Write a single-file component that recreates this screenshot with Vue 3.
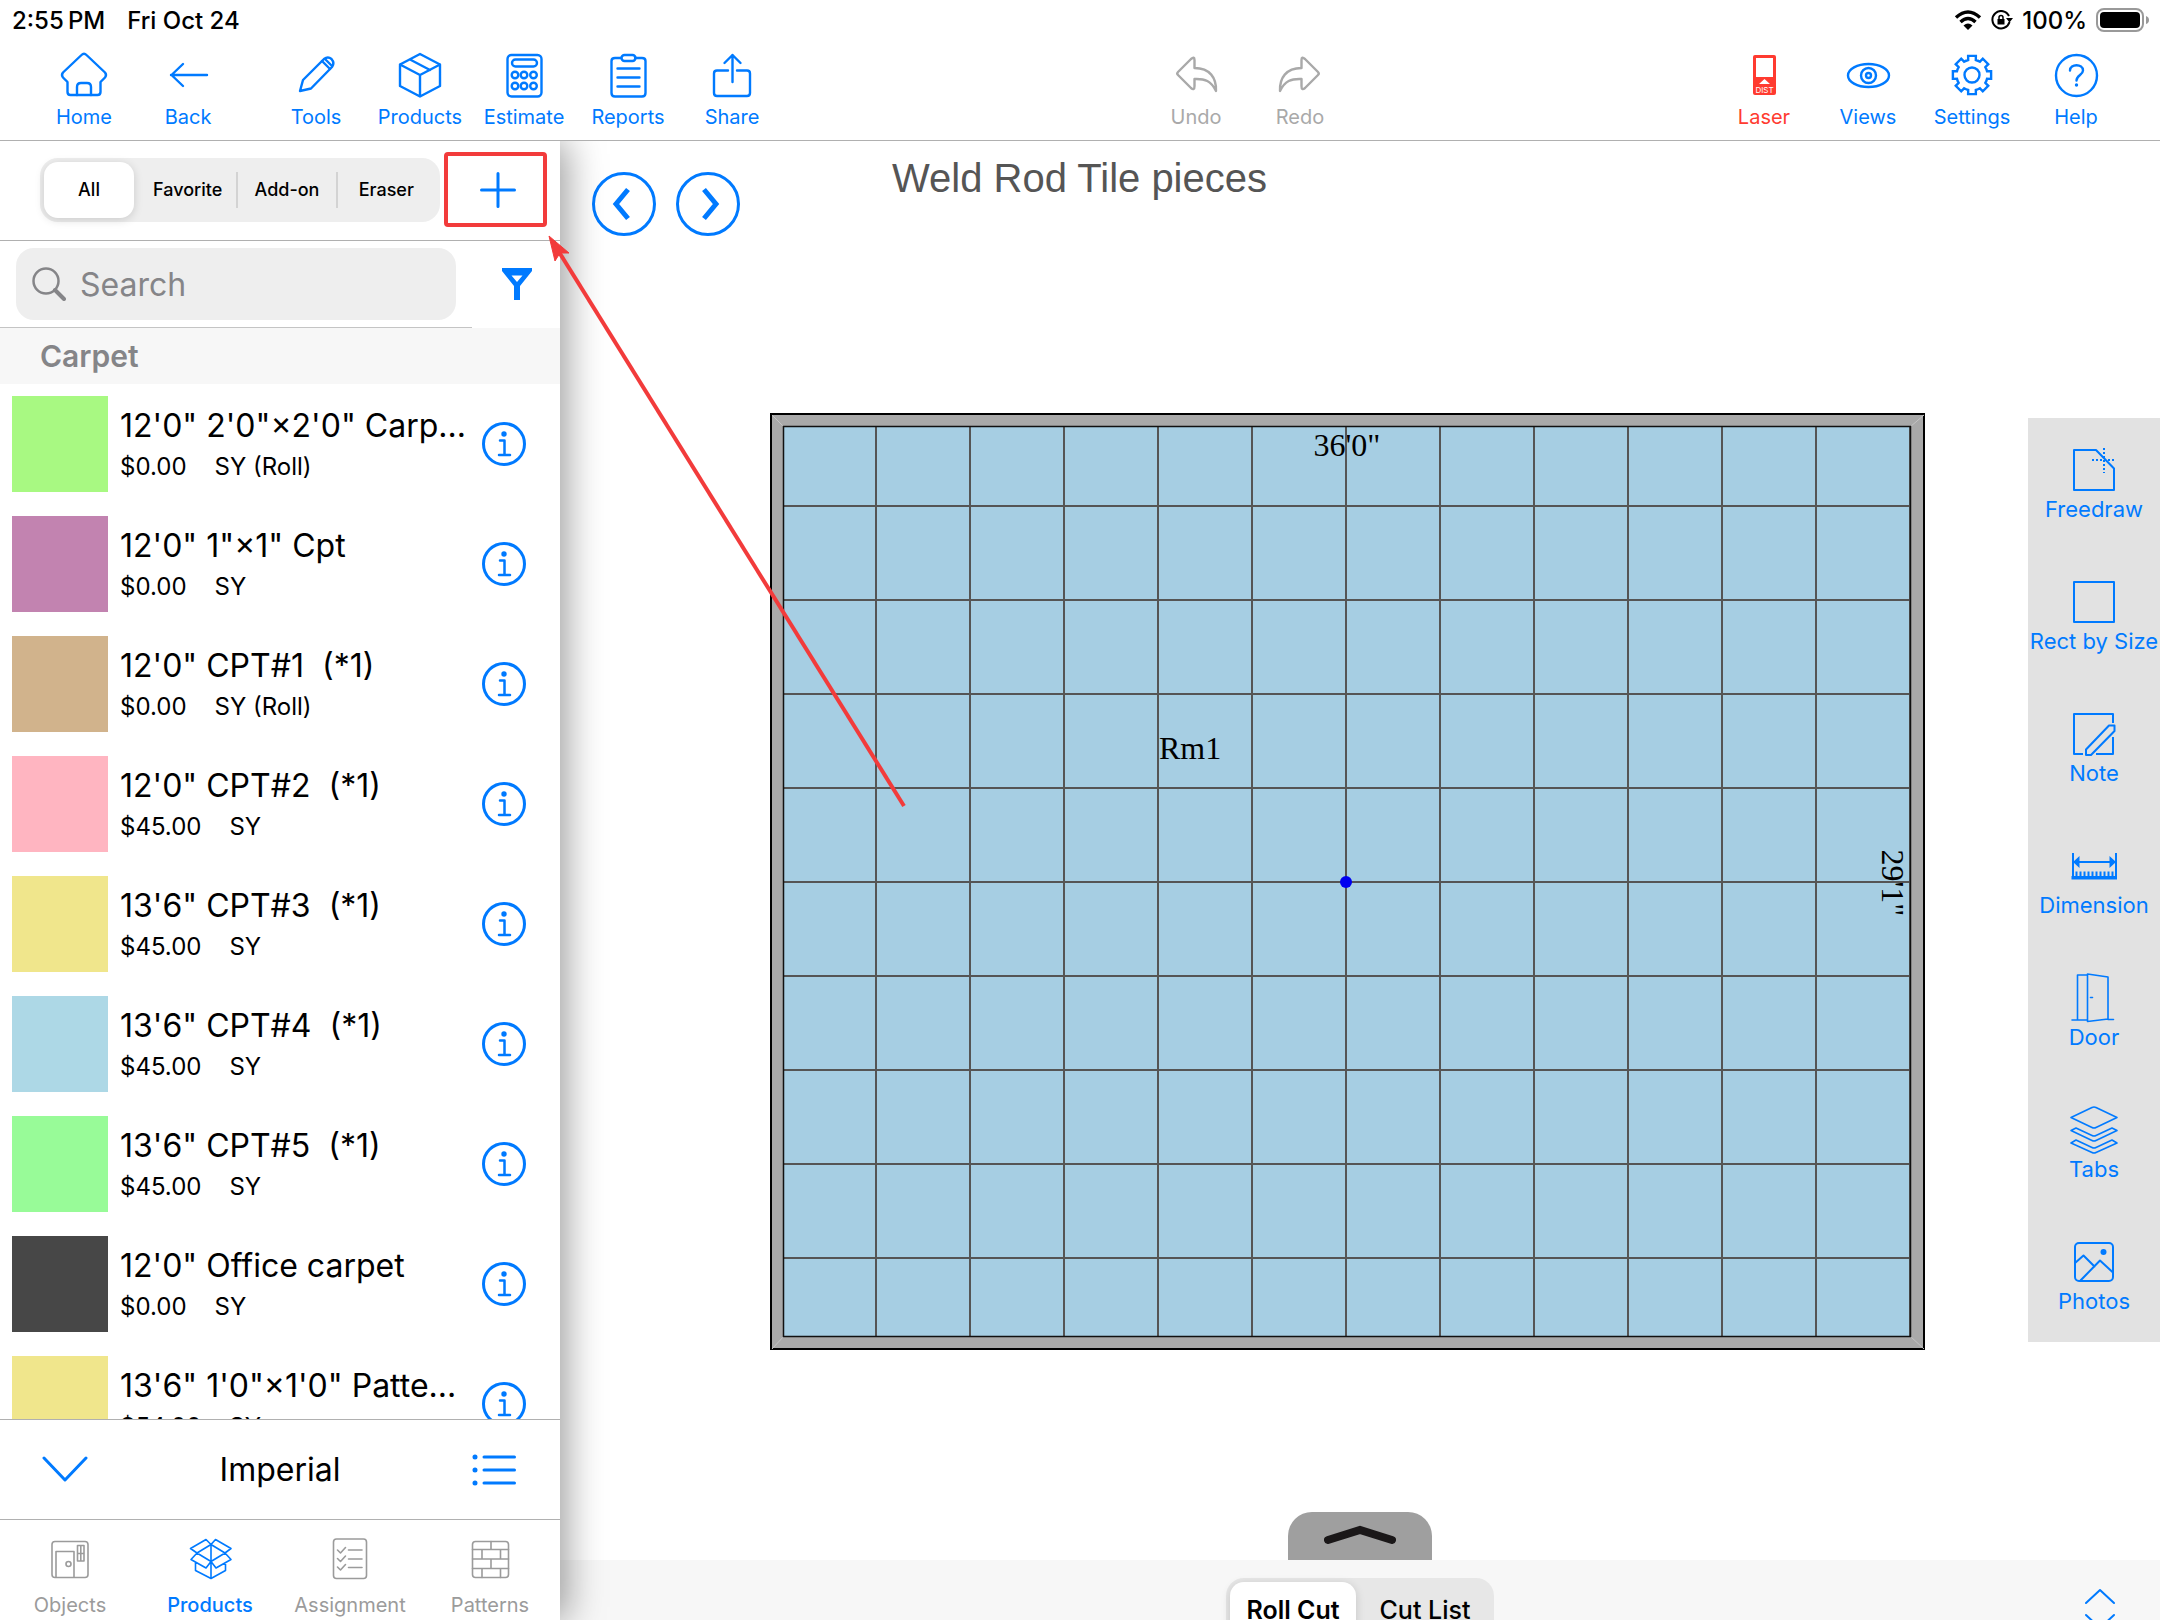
<script setup>
import { ref } from 'vue'

const gear = (() => {
  const c = 24
  const pt = (r, a) => `${(c + r * Math.cos(a)).toFixed(2)} ${(c + r * Math.sin(a)).toFixed(2)}`
  let d = ''
  for (let i = 0; i < 8; i++) {
    const a = (i * Math.PI) / 4 - Math.PI / 2
    d += `${i ? 'A15.5 15.5 0 0 1' : 'M'}${pt(15.5, a - 0.25)}L${pt(19.5, a - 0.2)}L${pt(19.5, a + 0.2)}L${pt(15.5, a + 0.25)}`
  }
  return `${d}A15.5 15.5 0 0 1 ${pt(15.5, -Math.PI / 2 - 0.25)}Z`
})()

const undoPath =
  'M6 21L19 8Q22.5 5 22.5 9V17C38 17 44.5 27 44 40C39 30 33 27.5 22.5 28V35Q22.5 40 19 37L6 24Q4.5 22.5 6 21Z'

const icons = {
  home: '<path d="M21.5 4Q24 1.500 26.500 4L45 21.500Q47 24 45 26.500L40.500 31V41Q40.500 44 37.500 44H10.500Q7.500 44 7.500 41V31L3 26.500Q1 24 3 21.500Z"/><path d="M17 44V36Q17 32 21 32H27Q31 32 31 36V44"/>',
  back: '<path d="M43 24H7M19 13L7.500 24L19 35"/>',
  tools: '<path d="M8 40L11 29L32 8Q36 5 39.500 8Q43 12 40 16L19 37.500Z"/><path d="M30 10L38 18M33 8L40 15"/>',
  products: '<path d="M24 3L44 13.500V35L24 45.500L4 35V13.500ZM4 13.500L24 24L44 13.500M24 24V45M14 8.500L34 19"/>',
  estimate:
    '<rect x="7.500" y="4" width="34" height="41.500" rx="4"/><rect x="12" y="8.500" width="25" height="7" rx="3.500"/><circle cx="15" cy="24" r="3.300"/><circle cx="24" cy="24" r="3.300"/><circle cx="33.500" cy="24" r="3.300"/><circle cx="15" cy="35" r="3.300"/><circle cx="24" cy="35" r="3.300"/><circle cx="33.500" cy="35" r="3.300"/>',
  reports:
    '<path d="M17 7H11Q7.500 7 7.500 10V42Q7.500 45.500 11 45.500H38Q41.500 45.500 41.500 42V10Q41.500 7 38 7H31"/><rect x="17.500" y="4" width="14" height="6" rx="3"/><path d="M13.500 17.500H35.500M13.500 26.500H35.500M13.500 35.500H35.500"/>',
  share: '<path d="M20 19.500H9Q6 19.500 6 22.500V42Q6 45 9 45H39Q42 45 42 42V22.500Q42 19.500 39 19.500H29M24.500 31V4M16.500 12L24.500 4L32.500 12"/>',
  undo: `<path d="${undoPath}"/>`,
  redo: `<path transform="matrix(-1 0 0 1 48 0)" d="${undoPath}"/>`,
  laser:
    '<rect x="13" y="4" width="23" height="40" rx="2" fill="currentColor" stroke="none"/><path d="M16 7H33V26H16ZM24.500 28L30 33H19Z" fill="#fff" stroke="none"/><text x="24.500" y="42" text-anchor="middle" font-size="8" fill="#fff" stroke="none">DIST</text>',
  views: '<ellipse cx="24.500" cy="24.500" rx="20.500" ry="11.500"/><circle cx="24.500" cy="24.500" r="7.500"/><circle cx="24.500" cy="24.500" r="2.500"/>',
  settings: `<path stroke-linejoin="miter" d="${gear}"/><circle cx="24" cy="24" r="7.500"/>`,
  help: '<circle cx="24.500" cy="24.500" r="20.500"/><path d="M18 19.500C18 12.500 31 12.500 31 19.500C31 24 24.500 24 24.500 29.500"/><circle cx="24.500" cy="34" r="1.700" fill="currentColor" stroke="none"/>',
  freedraw: '<path d="M4 4H26L44 22.500V44H4Z"/><path d="M22 14H46M34 2V27" stroke-dasharray="2 2" stroke-linecap="butt"/>',
  rect: '<path d="M4 4H44V44H4Z"/>',
  note: '<path d="M43 13V4H4V44H13M26 44H43V27M39 15.500H44.500V21L21 45H16V39.500Z" stroke-linecap="butt"/>',
  dimension:
    '<path d="M3 11V36M46 11V36M6 20H43" stroke-linecap="butt"/><path d="M1.500 34H47V37.500H1.500ZM3 20L9.500 14V26ZM46 20L39.500 14V26Z" fill="currentColor" stroke="none"/><path d="M5.500 32H44" stroke-width="5" stroke-dasharray="2 2" stroke-linecap="butt"/>',
  door: '<path stroke-width="1.600" d="M17.500 1H7.500V46M2 46H17.500M17.500 0L38 3V45L17.500 47.500ZM38 45.500H43.500M20.500 23.500H22.500"/>',
  tabs: '<path stroke-width="1.600" d="M22 1.500Q24 .5 26 1.500L47 11.500L26 21.500Q24 22.500 22 21.500L1 11.500ZM6 22L1 24.500L22 34.500Q24 35.500 26 34.500L47 24.500L42 22L26 29.500Q24 30.500 22 29.500ZM6 34L1 37L22 46.500Q24 47.500 26 46.500L47 37L42 34L26 41.500Q24 42.500 22 41.500Z"/>',
  photos:
    '<rect x="5" y="5" width="38" height="38" rx="4"/><circle cx="33.500" cy="14" r="3" fill="currentColor" stroke="none"/><path d="M5 25L13.500 17.500L24.500 28.500M10 43L30 22.500L43 34.500"/>',
  objects:
    '<rect x="6" y="6.500" width="36" height="36" rx="3"/><path d="M10 42V16.500H28V42M31.500 10.500H38V26H31.500ZM34.800 10.500V26M31.500 18.500H38"/><circle cx="22.500" cy="29" r="2.500"/>',
  box: '<path d="M25 9.500L20 4.500L4.500 13.500L11 18L25 9.500L29.500 4.500L45 13.500L39 18ZM11 18L25 26.500L20 33L5 24.500ZM39 18L25 26.500L30 33L45 24.500ZM9.500 27.500V35.500L25 43.500L39.500 35.500V27.500M25 9.500V43.500"/>',
  assignment:
    '<rect x="7.500" y="4" width="33" height="39.500" rx="3"/><path d="M11.500 15L14.500 18L19.500 12.500M11.500 23.500L14.500 26.500L19.500 21M11.500 32L14.500 35L19.500 29.500M22.500 15H36M22.500 24H36M22.500 32.500H36"/>',
  patterns:
    '<rect x="6.500" y="6.500" width="36" height="36" rx="3"/><path d="M6.500 14.500H42.500M6.500 24H42.500M6.500 33.500H42.500M25 6.500V14.500M16 14.500V24M34.500 14.500V24M25 24V33.500M16 33.500V42.500M34.500 33.500V42.500"/>',
}

const leftTools = [
  [
    { icon: 'home', label: 'Home' },
    { icon: 'back', label: 'Back' },
  ],
  [
    { icon: 'tools', label: 'Tools' },
    { icon: 'products', label: 'Products' },
    { icon: 'estimate', label: 'Estimate' },
    { icon: 'reports', label: 'Reports' },
    { icon: 'share', label: 'Share' },
  ],
]
const historyTools = [
  { icon: 'undo', label: 'Undo' },
  { icon: 'redo', label: 'Redo' },
]
const rightTools = [
  { icon: 'laser', label: 'Laser', alert: true },
  { icon: 'views', label: 'Views' },
  { icon: 'settings', label: 'Settings' },
  { icon: 'help', label: 'Help' },
]

const filters = ['All', 'Favorite', 'Add-on', 'Eraser']
const filter = ref('All')
const query = ref('')

const products = [
  { color: '#a8f982', name: '12\'0" 2\'0"×2\'0" Carp...', price: '$0.00', unit: 'SY (Roll)' },
  { color: '#c283b0', name: '12\'0" 1"×1" Cpt', price: '$0.00', unit: 'SY' },
  { color: '#d1b38c', name: '12\'0" CPT#1  (*1)', price: '$0.00', unit: 'SY (Roll)' },
  { color: '#ffb5c1', name: '12\'0" CPT#2  (*1)', price: '$45.00', unit: 'SY' },
  { color: '#f0e68c', name: '13\'6" CPT#3  (*1)', price: '$45.00', unit: 'SY' },
  { color: '#add8e6', name: '13\'6" CPT#4  (*1)', price: '$45.00', unit: 'SY' },
  { color: '#98fb98', name: '13\'6" CPT#5  (*1)', price: '$45.00', unit: 'SY' },
  { color: '#474747', name: '12\'0" Office carpet', price: '$0.00', unit: 'SY' },
  { color: '#f0e68c', name: '13\'6" 1\'0"×1\'0" Patte...', price: '$54.00', unit: 'SY' },
]

const tabs = [
  { icon: 'objects', label: 'Objects' },
  { icon: 'box', label: 'Products' },
  { icon: 'assignment', label: 'Assignment' },
  { icon: 'patterns', label: 'Patterns' },
]
const tab = ref('Products')

const palette = [
  { icon: 'freedraw', label: 'Freedraw' },
  { icon: 'rect', label: 'Rect by Size' },
  { icon: 'note', label: 'Note' },
  { icon: 'dimension', label: 'Dimension' },
  { icon: 'door', label: 'Door' },
  { icon: 'tabs', label: 'Tabs' },
  { icon: 'photos', label: 'Photos' },
]

const cutViews = ['Roll Cut', 'Cut List']
const cutView = ref('Roll Cut')

const tile = 94
const columns = Array.from({ length: 12 }, (_, i) => 106 + i * tile)
const rows = Array.from({ length: 9 }, (_, i) => 93 + i * tile)
</script>

<template>
  <div class="app">
    <header class="header">
      <div class="status">
        <span>2:55&thinsp;PM</span>
        <span>Fri Oct 24</span>
        <div class="status-right">
          <svg width="28" height="20" viewBox="0 0 28 20" aria-label="Wi-Fi">
            <path d="M14 20L9.500 15.500Q14 11.500 18.500 15.500Z" />
            <path d="M2 7.500Q14-3.500 26 7.500M6.500 12Q14 5 21.500 12" fill="none" stroke="#000" stroke-width="3.400" />
          </svg>
          <svg width="22" height="20" viewBox="0 0 22 20" aria-label="Rotation lock">
            <path d="M18.500 12A8.700 8.700 0 1 1 18 6" fill="none" stroke="#000" stroke-width="2" />
            <path d="M15 8H22L18.500 12.500ZM6.500 9H13.500V14.500H6.500Z" />
            <path d="M8 9V7.500Q8 5.500 10 5.500T12 7.500V9" fill="none" stroke="#000" stroke-width="1.500" />
          </svg>
          <span>100%</span>
          <svg width="54" height="24" viewBox="0 0 54 24" aria-label="Battery">
            <rect x="1" y="1" width="46" height="22" rx="7" fill="none" stroke="#999" stroke-width="2" />
            <rect x="4" y="4" width="40" height="16" rx="4" />
            <path d="M50 8Q53 9 53 12T50 16Z" fill="#999" />
          </svg>
        </div>
      </div>
      <nav class="toolbar">
        <div class="tool-groups">
          <div v-for="(group, i) in leftTools" :key="i" class="tool-group">
            <button v-for="t in group" :key="t.label" class="tool">
              <svg class="icon" viewBox="0 0 48 48" v-html="icons[t.icon]" />
              <span>{{ t.label }}</span>
            </button>
          </div>
        </div>
        <div class="tool-group">
          <button v-for="t in historyTools" :key="t.label" class="tool muted">
            <svg class="icon" viewBox="0 0 48 48" v-html="icons[t.icon]" />
            <span>{{ t.label }}</span>
          </button>
        </div>
        <div class="tool-group">
          <button v-for="t in rightTools" :key="t.label" class="tool" :class="{ alert: t.alert }">
            <svg class="icon" viewBox="0 0 48 48" v-html="icons[t.icon]" />
            <span>{{ t.label }}</span>
          </button>
        </div>
      </nav>
    </header>

    <div class="body">
      <aside class="sidebar">
        <div class="filter-row">
          <div class="segmented">
            <button
              v-for="f in filters"
              :key="f"
              class="segment"
              :class="{ active: filter === f }"
              :aria-pressed="filter === f"
              @click="filter = f"
            >
              {{ f }}
            </button>
          </div>
          <button class="add" aria-label="Add product">
            <svg width="36" height="36" viewBox="0 0 36 36"><path d="M18 1.500V34.500M1.500 18H34.500" /></svg>
          </button>
        </div>

        <div class="search-row">
          <div class="search-cell">
            <label class="search">
              <svg width="34" height="34" viewBox="0 0 34 34">
                <circle cx="14" cy="14" r="12.500" />
                <path d="M23 23L32 32" stroke-width="4" />
              </svg>
              <input v-model="query" type="text" placeholder="Search" aria-label="Search" />
            </label>
          </div>
          <button class="funnel" aria-label="Filter">
            <svg width="32" height="34" viewBox="0 0 32 34">
              <path fill-rule="evenodd" d="M1 1H31V4L19 19V33H13V19L1 4ZM10.500 8.500L16 15L21.500 8.500Z" />
            </svg>
          </button>
        </div>

        <h2 class="section">Carpet</h2>
        <ul class="list">
          <li v-for="p in products" :key="p.name" class="row">
            <span class="swatch" :style="{ background: p.color }" />
            <div class="info">
              <div class="name">{{ p.name }}</div>
              <div class="meta"><span>{{ p.price }}</span><span>{{ p.unit }}</span></div>
            </div>
            <button class="details" :aria-label="'Details for ' + p.name">
              <svg width="44" height="44" viewBox="0 0 44 44">
                <circle cx="22" cy="22" r="20.500" stroke-width="3" />
                <circle cx="22" cy="12" r="2.700" fill="currentColor" stroke="none" />
                <path d="M18 18.500H22.500V33M17 33H28" stroke-width="2.500" />
              </svg>
            </button>
          </li>
        </ul>

        <div class="units">
          <button class="units-side" aria-label="Collapse">
            <svg width="46" height="28" viewBox="0 0 46 28"><path d="M2 2L23 24L44 2" stroke-width="3" /></svg>
          </button>
          <span>Imperial</span>
          <button class="units-side" aria-label="List view">
            <svg width="44" height="34" viewBox="0 0 44 34">
              <path d="M12 4H42.500M12 17H42.500M12 30H42.500" stroke-width="3" />
              <path d="M3 4H3.010M3 17H3.010M3 30H3.010" stroke-width="5" />
            </svg>
          </button>
        </div>

        <nav class="tabs">
          <button v-for="t in tabs" :key="t.label" class="tab" :class="{ active: tab === t.label }" @click="tab = t.label">
            <svg class="icon" viewBox="0 0 48 48" v-html="icons[t.icon]" />
            <span>{{ t.label }}</span>
          </button>
        </nav>
      </aside>

      <main class="canvas">
        <div class="canvas-top">
          <button class="round" aria-label="Previous">
            <svg width="64" height="64" viewBox="0 0 64 64">
              <circle cx="32" cy="32" r="30.500" /><path d="M36 17.500L24 32L36 46.500" />
            </svg>
          </button>
          <button class="round" aria-label="Next">
            <svg width="64" height="64" viewBox="0 0 64 64">
              <circle cx="32" cy="32" r="30.500" /><path d="M28 17.500L40 32L28 46.500" />
            </svg>
          </button>
          <h1 class="title">Weld Rod Tile pieces</h1>
        </div>

        <div class="work">
          <svg class="plan" width="1156" height="938" viewBox="0 0 1156 938">
            <rect x="1" y="1" width="1153" height="935" fill="#a9a9a9" stroke="#000" stroke-width="2" />
            <path d="M2 2L14 14M1154 936L1140 923M1154 2L1140 14M2 936L14 923" stroke="#c4c4c4" />
            <rect x="13.500" y="13.500" width="1127" height="910" fill="#a6cee3" />
            <text x="577" y="43" text-anchor="middle">36'0"</text>
            <text x="389" y="346">Rm1</text>
            <text transform="translate(1112 470) rotate(90)" text-anchor="middle">29'1"</text>
            <g stroke="#555" stroke-width="2">
              <line v-for="x in columns" :key="'c' + x" :x1="x" :x2="x" y1="14" y2="923" />
              <line v-for="y in rows" :key="'r' + y" x1="14" x2="1140" :y1="y" :y2="y" />
            </g>
            <rect x="13.500" y="13.500" width="1127" height="910" fill="none" stroke="#111" stroke-width="1.500" />
            <circle cx="576" cy="469" r="6" fill="#0000f0" />
          </svg>
          <nav class="palette">
            <button v-for="t in palette" :key="t.label" class="palette-item">
              <svg class="icon" viewBox="0 0 48 48" v-html="icons[t.icon]" />
              <span>{{ t.label }}</span>
            </button>
          </nav>
        </div>

        <button class="handle" aria-label="Expand panel">
          <svg width="72" height="24" viewBox="0 0 72 24"><path d="M4 18L36 8L68 18" /></svg>
        </button>
        <footer class="dock">
          <div class="segmented cut">
            <button
              v-for="c in cutViews"
              :key="c"
              class="segment"
              :class="{ active: cutView === c }"
              :aria-pressed="cutView === c"
              @click="cutView = c"
            >
              {{ c }}
            </button>
          </div>
          <button class="resize" aria-label="Resize panel">
            <svg width="30" height="42" viewBox="0 0 30 42"><path d="M1 15L15 2L29 15M1 27L15 40L29 27" /></svg>
          </button>
        </footer>
      </main>
    </div>

    <svg class="pointer" width="920" height="820" viewBox="0 0 920 820" aria-hidden="true">
      <path d="M904 806L559 252" stroke="#f23b3b" stroke-width="4" />
      <path d="M549 236L569 253L560 253L555 261Z" fill="#f23b3b" stroke="#f23b3b" stroke-width="1" />
    </svg>
  </div>
</template>

<style>
body {
  background: #fff;
  overflow: hidden;
}
</style>

<style scoped>
* {
  box-sizing: border-box;
}
.app {
  position: relative;
  display: flex;
  flex-direction: column;
  height: 100vh;
  overflow: hidden;
  font-family: Inter, "Liberation Sans", sans-serif;
  color: #000;
}
button {
  margin: 0;
  padding: 0;
  border: 0;
  background: none;
  font: inherit;
  color: #007aff;
  cursor: pointer;
}
svg {
  display: block;
  flex: none;
}
.icon {
  width: 48px;
  height: 48px;
  overflow: visible;
}
.icon,
.details svg,
.units svg,
.round svg,
.resize svg,
.add svg {
  fill: none;
  stroke: currentColor;
  stroke-width: 2;
  stroke-linejoin: round;
  stroke-linecap: round;
}

.header {
  flex: none;
  border-bottom: 1px solid #b0b0b0;
}
.status {
  display: flex;
  align-items: center;
  gap: 22px;
  height: 40px;
  padding: 0 10px 0 12px;
  font-size: 24px;
  font-weight: 500;
}
.status-right {
  display: flex;
  align-items: center;
  gap: 9px;
  margin-left: auto;
}
.toolbar {
  display: flex;
  justify-content: space-between;
  height: 100px;
  padding: 11px 32px 0;
}
.toolbar .icon {
  stroke-width: 2.4;
}
.tool-groups {
  display: flex;
  gap: 24px;
}
.tool-group {
  display: flex;
}
.tool {
  display: flex;
  flex-direction: column;
  align-items: center;
  gap: 6px;
  width: 104px;
  height: 80px;
  font-size: 20px;
  line-height: 24px;
}
.tool.muted {
  color: #a9a9a9;
}
.tool.alert {
  color: #ff3b30;
}

.body {
  display: flex;
  flex: 1;
  min-height: 0;
}
.sidebar {
  position: relative;
  z-index: 1;
  display: flex;
  flex-direction: column;
  flex: none;
  width: 560px;
  background: #fff;
  box-shadow: 6px 0 36px rgba(0, 0, 0, 0.4);
  clip-path: inset(0 -60px 0 0);
}
.filter-row {
  display: flex;
  align-items: center;
  gap: 4px;
  height: 99px;
  padding: 0 0 2px 40px;
}
.segmented {
  display: flex;
  width: 400px;
  height: 64px;
  padding: 4px;
  border-radius: 18px;
  background: #eee;
}
.segment {
  position: relative;
  flex: 1;
  border-radius: 14px;
  font-size: 18px;
  font-weight: 500;
  color: #000;
}
.segment.active {
  flex: 0 0 90px;
  margin-right: 4px;
  background: #fff;
  box-shadow: 0 2px 10px rgba(0, 0, 0, 0.15);
}
.segment:not(.active) + .segment::before {
  content: "";
  position: absolute;
  top: 10px;
  bottom: 10px;
  left: -1px;
  width: 2px;
  background: #d3d3d3;
}
.add {
  display: flex;
  align-items: center;
  justify-content: center;
  width: 103px;
  height: 75px;
  padding-left: 4px;
  border: 4px solid #f23b3b;
  border-radius: 4px;
}
.add svg {
  stroke-width: 3;
}
.search-row {
  display: flex;
  height: 88px;
  border-top: 1px solid #b0b0b0;
}
.search-cell {
  width: 472px;
  padding: 7px 16px;
  border-bottom: 1px solid #c4c4c4;
}
.search {
  display: flex;
  align-items: center;
  gap: 14px;
  width: 440px;
  height: 72px;
  padding: 0 16px;
  border-radius: 18px;
  background: #eee;
}
.search svg {
  fill: none;
  stroke: #858588;
  stroke-width: 2.5;
  stroke-linecap: round;
}
.search input {
  flex: 1;
  min-width: 0;
  padding: 0;
  border: 0;
  outline: 0;
  background: none;
  font: inherit;
  font-size: 32px;
}
.search input::placeholder {
  color: #858588;
  opacity: 1;
}
.funnel {
  display: flex;
  flex: 1;
  align-items: center;
  justify-content: center;
  padding: 0 0 2px 2px;
}
.funnel svg {
  fill: currentColor;
}
.section {
  margin: 0;
  padding-left: 40px;
  background: #f7f7f7;
  font-size: 30px;
  font-weight: 600;
  line-height: 56px;
  color: #858588;
}
.list {
  flex: 1;
  min-height: 0;
  margin: 0;
  padding: 0;
  overflow: hidden;
  list-style: none;
}
.row {
  display: flex;
  align-items: center;
  height: 120px;
  padding: 0 34px 0 12px;
}
.swatch {
  flex: none;
  width: 96px;
  height: 96px;
}
.info {
  flex: 1;
  min-width: 0;
  padding: 0 0 2px 12px;
  white-space: pre;
}
.name {
  font-size: 32px;
  line-height: 48px;
}
.meta {
  display: flex;
  gap: 28px;
  font-size: 24px;
  line-height: 34px;
}
.units {
  display: flex;
  align-items: center;
  justify-content: space-between;
  height: 101px;
  padding: 0 44px 0 42px;
  border-top: 1px solid #b0b0b0;
  border-bottom: 1px solid #b0b0b0;
  font-size: 32px;
}
.tabs {
  display: flex;
  height: 100px;
  padding-top: 15px;
}
.tab {
  display: flex;
  flex: 1;
  flex-direction: column;
  align-items: center;
  gap: 10px;
  font-size: 20px;
  line-height: 24px;
  color: #9b9b9b;
}
.tab .icon {
  stroke-width: 1.6;
}
.tab.active {
  font-weight: 500;
  color: #007aff;
}

.canvas {
  display: flex;
  flex: 1;
  flex-direction: column;
  min-width: 0;
}
.canvas-top {
  display: flex;
  gap: 20px;
  height: 272px;
  padding: 31px 32px 0;
}
.round {
  width: 64px;
  height: 64px;
}
.round svg {
  stroke-width: 3;
}
.round path {
  stroke-width: 5;
  stroke-linecap: butt;
  stroke-linejoin: miter;
}
.title {
  margin: -18px 0 0 132px;
  font: 40px/48px "Liberation Sans", Arial, sans-serif;
  color: #555;
}
.work {
  display: flex;
  align-items: flex-start;
  justify-content: space-between;
  padding-left: 210px;
}
.plan text {
  font: 32px "Liberation Serif", "Times New Roman", serif;
}
.palette {
  display: flex;
  flex-direction: column;
  width: 132px;
  margin-top: 5px;
  background: #e2e2e2;
}
.palette-item {
  display: flex;
  flex-direction: column;
  align-items: center;
  height: 132px;
  padding-top: 28px;
  font-size: 22px;
  line-height: 30px;
  white-space: nowrap;
}
.handle {
  display: flex;
  align-items: flex-start;
  justify-content: center;
  align-self: center;
  width: 144px;
  height: 48px;
  margin-top: auto;
  padding-top: 10px;
  border-radius: 24px 24px 0 0;
  background: #9f9f9f;
}
.handle svg {
  fill: none;
  stroke: #1a1718;
  stroke-width: 8;
  stroke-linecap: round;
}
.dock {
  display: grid;
  grid-template-columns: 1fr auto 1fr;
  flex: none;
  height: 60px;
  padding: 18px 45px 0 0;
  overflow: hidden;
  background: #f7f7f7;
}
.cut {
  grid-column: 2;
  width: 268px;
  margin-left: 45px;
  background: #e7e7e7;
}
.cut .segment {
  font-size: 25px;
}
.cut .segment.active {
  flex: 0 0 126px;
  font-weight: 600;
}
.resize {
  justify-self: end;
  align-self: start;
  padding-top: 10px;
}
.pointer {
  position: absolute;
  top: 0;
  left: 0;
  z-index: 2;
  pointer-events: none;
}
</style>
